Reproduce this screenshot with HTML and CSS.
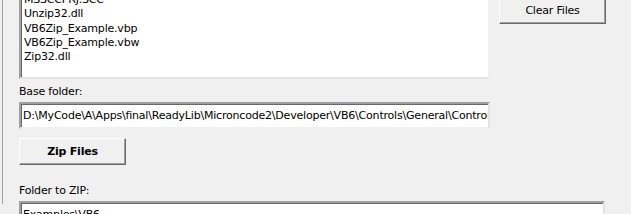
FILE: index.html
```html
<!DOCTYPE html>
<html lang="en">
<head>
  <meta charset="UTF-8">
  <title>VB6 Zip Example</title>
  <link rel="stylesheet" href="styles.css">
</head>
<body>
  <div class="frame">
    <div class="top-row">
      <div class="listbox">
        <div class="item">MSSCCPRJ.SCC</div>
        <div class="item">Unzip32.dll</div>
        <div class="item">VB6Zip_Example.vbp</div>
        <div class="item">VB6Zip_Example.vbw</div>
        <div class="item">Zip32.dll</div>
      </div>
      <div class="side">
        <button class="btn clear">Clear Files</button>
      </div>
    </div>

    <div class="label base-label">Base folder:</div>
    <div class="textbox base">D:\MyCode\A\Apps\final\ReadyLib\Microncode2\Developer\VB6\Controls\General\Controls\Zip</div>

    <button class="btn zip">Zip Files</button>

    <div class="label folder-label">Folder to ZIP:</div>
    <div class="textbox folder">Examples\VB6</div>
  </div>
</body>
</html>
```

FILE: styles.css
```css
*, *::before, *::after {
  box-sizing: border-box;
}

body {
  margin: 0;
  background-color: #f0f0f0;
  font-family: "DejaVu Sans", Verdana, sans-serif;
  font-size: 11px;
  letter-spacing: -0.2px;
  color: #000;
  height: 214px;
  overflow: hidden;
}

.frame {
  margin-left: 2px;
  border-left: 1px solid #a0a0a0;
  padding-left: 16px;
  height: 100%;
}

.top-row {
  display: flex;
  margin-top: -10px;
}

.listbox {
  width: 471px;
  height: 89px;
  background: #fff;
  border: 2px solid;
  border-color: #a0a0a0 #f0f0f0 #e3e3e3 #a0a0a0;
  box-shadow: inset 1px 1px 0 #696969;
  padding: 1px 0 0 3px;
  overflow: hidden;
}

.item {
  line-height: 14.3px;
  height: 14.3px;
  white-space: nowrap;
}

.side {
  margin-left: 9px;
  padding-top: 7px;
}

.btn {
  display: block;
  width: 107px;
  height: 27px;
  background: #f0f0f0;
  border: 1px solid;
  border-color: #fff #696969 #696969 #fff;
  box-shadow: inset -1px -1px 0 #a0a0a0;
  font-family: inherit;
  font-size: 11px;
  letter-spacing: -0.2px;
  color: #000;
  padding: 0;
}

.zip {
  font-weight: bold;
  margin-top: 9px;
}

.label {
  line-height: 13px;
}

.base-label {
  margin-top: 6px;
}

.folder-label {
  margin-top: 19px;
}

.textbox {
  background: #fff;
  border: 2px solid;
  border-color: #a0a0a0 #e3e3e3 #f0f0f0 #a0a0a0;
  box-shadow: inset 1px 1px 0 #696969;
  height: 27px;
  line-height: 23px;
  padding-left: 2px;
  white-space: nowrap;
  overflow: hidden;
  margin-top: 4px;
}

.base {
  width: 471px;
}

.base-text {
  letter-spacing: -0.2px;
}

.folder {
  width: 586px;
}
```
